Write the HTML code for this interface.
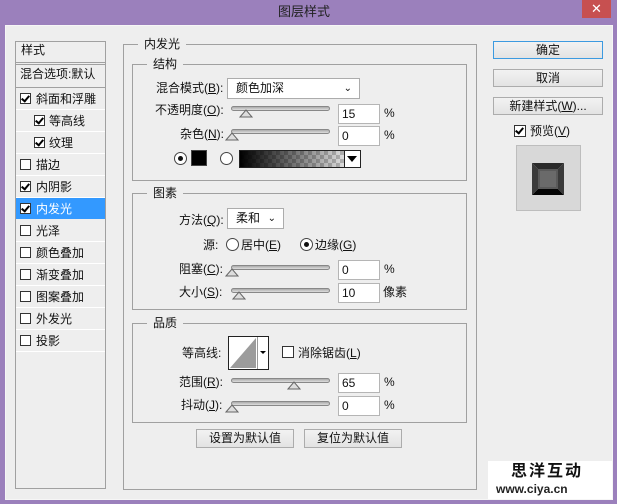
<!DOCTYPE html>
<html><head><meta charset="utf-8"><style>
*{margin:0;padding:0;box-sizing:border-box}
body{width:617px;height:504px;background:#9b80bc;font-family:"Liberation Sans","Noto Sans CJK SC",sans-serif;font-size:12px;color:#111;position:relative;overflow:hidden}
.a{position:absolute}
.t{position:absolute;white-space:nowrap;line-height:14px}
#content{left:5px;top:25px;width:608px;height:475px;background:#eeeeee;border:1px solid #f6f6f6}
.grp{position:absolute;border:1px solid #a0a0a0}
.leg{position:absolute;background:#eeeeee;padding:0 6px;line-height:14px;top:-8px;left:14px;font-size:12px}
.cb{position:absolute;width:11px;height:11px;border:1px solid #333;background:#fff}
.cb.on::after{content:"";position:absolute;left:2px;top:0px;width:3px;height:6px;border:solid #000;border-width:0 2px 2px 0;transform:rotate(40deg)}
.row{position:absolute;left:16px;width:89px;height:22px;border-bottom:1px solid #fff}
.inp{position:absolute;width:42px;height:20px;background:#fff;border:1px solid #b5b5b5;padding-left:3px;line-height:18px;font-size:12px}
.trk{position:absolute;height:5px;border:1px solid #888;border-radius:3px;background:linear-gradient(#aaa,#ddd);width:99px}
.th{position:absolute;width:0;height:0}
.btn{position:absolute;height:18px;border:1px solid #acacac;background:linear-gradient(#f2f2f2,#e3e3e3);text-align:center;line-height:16px;font-size:12px}
.rad{position:absolute;width:13px;height:13px;border-radius:50%;border:1px solid #444;background:#fff}
.rad.on::after{content:"";position:absolute;left:3px;top:3px;width:5px;height:5px;border-radius:50%;background:#111}
.sel{position:absolute;background:#fff;border:1px solid #acacac;height:21px;line-height:19px;padding-left:8px}
</style></head><body>
<div class="t" style="left:278px;top:5px;font-size:13px;color:#222">图层样式</div>
<div class="a" style="left:582px;top:0;width:29px;height:18px;background:#c75050;color:#fff;text-align:center;font-size:13px;line-height:17px">✕</div>
<div class="a" id="content"></div>

<!-- left panel -->
<div class="a" style="left:15px;top:41px;width:91px;height:448px;border:1px solid #a0a0a0;background:#eeeeee"></div>
<div class="t" style="left:21px;top:43px">样式</div>
<div class="a" style="left:16px;top:62px;width:89px;height:3px;border-top:1px solid #a0a0a0;border-bottom:1px solid #a0a0a0"></div>
<div class="t" style="left:20px;top:67px">混合选项:默认</div>
<div class="a" style="left:16px;top:87px;width:89px;height:1px;background:#a0a0a0"></div>
<div class="row" style="top:88px"></div><div class="cb on" style="left:20px;top:93px"></div><div class="t" style="left:36px;top:92px">斜面和浮雕</div>
<div class="row" style="top:110px"></div><div class="cb on" style="left:34px;top:115px"></div><div class="t" style="left:49px;top:114px">等高线</div>
<div class="row" style="top:132px"></div><div class="cb on" style="left:34px;top:137px"></div><div class="t" style="left:49px;top:136px">纹理</div>
<div class="row" style="top:154px"></div><div class="cb" style="left:20px;top:159px"></div><div class="t" style="left:36px;top:158px">描边</div>
<div class="row" style="top:176px"></div><div class="cb on" style="left:20px;top:181px"></div><div class="t" style="left:36px;top:180px">内阴影</div>
<div class="a" style="left:16px;top:198px;width:89px;height:21px;background:#3399ff"></div><div class="cb on" style="left:20px;top:203px"></div><div class="t" style="left:36px;top:202px;color:#fff">内发光</div>
<div class="row" style="top:220px"></div><div class="cb" style="left:20px;top:225px"></div><div class="t" style="left:36px;top:224px">光泽</div>
<div class="row" style="top:242px"></div><div class="cb" style="left:20px;top:247px"></div><div class="t" style="left:36px;top:246px">颜色叠加</div>
<div class="row" style="top:264px"></div><div class="cb" style="left:20px;top:269px"></div><div class="t" style="left:36px;top:268px">渐变叠加</div>
<div class="row" style="top:286px"></div><div class="cb" style="left:20px;top:291px"></div><div class="t" style="left:36px;top:290px">图案叠加</div>
<div class="row" style="top:308px"></div><div class="cb" style="left:20px;top:313px"></div><div class="t" style="left:36px;top:312px">外发光</div>
<div class="row" style="top:330px"></div><div class="cb" style="left:20px;top:335px"></div><div class="t" style="left:36px;top:334px">投影</div>

<!-- main group -->
<div class="grp" style="left:123px;top:44px;width:354px;height:446px"><div class="leg">内发光</div></div>
<div class="grp" style="left:132px;top:64px;width:335px;height:117px"><div class="leg">结构</div></div>
<div class="grp" style="left:132px;top:193px;width:335px;height:117px"><div class="leg">图素</div></div>
<div class="grp" style="left:132px;top:323px;width:335px;height:100px"><div class="leg">品质</div></div>

<!-- structure -->
<div class="t" style="left:156px;top:81px">混合模式(<u>B</u>):</div>
<div class="sel" style="left:227px;top:78px;width:133px">颜色加深<span style="position:absolute;right:7px;font-size:10px">⌄</span></div>
<div class="t" style="left:155px;top:103px">不透明度(<u>O</u>):</div>
<div class="trk" style="left:231px;top:106px"></div>
<svg class="a" style="left:239px;top:108px" width="14" height="10"><path d="M1 9 L7 2 L13 9 Z" fill="#ddd" stroke="#666"/></svg>
<div class="inp" style="left:338px;top:104px">15</div><div class="t" style="left:384px;top:106px">%</div>
<div class="t" style="left:180px;top:127px">杂色(<u>N</u>):</div>
<div class="trk" style="left:231px;top:129px"></div>
<svg class="a" style="left:225px;top:131px" width="14" height="10"><path d="M1 9 L7 2 L13 9 Z" fill="#ddd" stroke="#666"/></svg>
<div class="inp" style="left:338px;top:126px">0</div><div class="t" style="left:384px;top:128px">%</div>
<div class="rad on" style="left:174px;top:152px"></div>
<div class="a" style="left:191px;top:150px;width:16px;height:16px;background:#000;border:1px solid #444"></div>
<div class="rad" style="left:220px;top:152px"></div>
<div class="a" style="left:239px;top:150px;width:122px;height:18px;border:1px solid #222;background:linear-gradient(90deg,#000,rgba(0,0,0,0)) ,repeating-conic-gradient(#ccc 0 25%,#fff 0 50%) 0 0/8px 8px"></div>
<div class="a" style="left:344px;top:151px;width:16px;height:16px;background:#fff;border-left:1px solid #222"></div>
<svg class="a" style="left:346px;top:155px" width="12" height="8"><path d="M1 1 L11 1 L6 7 Z" fill="#000"/></svg>

<!-- elements -->
<div class="t" style="left:179px;top:213px">方法(<u>Q</u>):</div>
<div class="sel" style="left:227px;top:208px;width:57px">柔和<span style="position:absolute;right:7px;font-size:10px">⌄</span></div>
<div class="t" style="left:203px;top:238px">源:</div>
<div class="rad" style="left:226px;top:238px"></div><div class="t" style="left:241px;top:238px">居中(<u>E</u>)</div>
<div class="rad on" style="left:300px;top:238px"></div><div class="t" style="left:315px;top:238px">边缘(<u>G</u>)</div>
<div class="t" style="left:179px;top:262px">阻塞(<u>C</u>):</div>
<div class="trk" style="left:231px;top:265px"></div>
<svg class="a" style="left:225px;top:267px" width="14" height="10"><path d="M1 9 L7 2 L13 9 Z" fill="#ddd" stroke="#666"/></svg>
<div class="inp" style="left:338px;top:260px">0</div><div class="t" style="left:384px;top:262px">%</div>
<div class="t" style="left:179px;top:285px">大小(<u>S</u>):</div>
<div class="trk" style="left:231px;top:288px"></div>
<svg class="a" style="left:232px;top:290px" width="14" height="10"><path d="M1 9 L7 2 L13 9 Z" fill="#ddd" stroke="#666"/></svg>
<div class="inp" style="left:338px;top:283px">10</div><div class="t" style="left:383px;top:285px">像素</div>

<!-- quality -->
<div class="t" style="left:182px;top:346px">等高线:</div>
<div class="a" style="left:228px;top:336px;width:41px;height:34px;background:#fff;border:1px solid #222"></div>
<svg class="a" style="left:229px;top:337px" width="28" height="32"><path d="M1 31 L27 1 L27 31 Z" fill="#9c9c9c"/></svg>
<div class="a" style="left:257px;top:337px;width:1px;height:32px;background:#999"></div>
<svg class="a" style="left:259px;top:350px" width="8" height="5"><path d="M1 1 L7 1 L4 4 Z" fill="#000"/></svg>
<div class="a" style="left:282px;top:346px;width:12px;height:12px;border:1px solid #333;background:#fff"></div>
<div class="t" style="left:298px;top:346px">消除锯齿(<u>L</u>)</div>
<div class="t" style="left:179px;top:375px">范围(<u>R</u>):</div>
<div class="trk" style="left:231px;top:378px"></div>
<svg class="a" style="left:287px;top:380px" width="14" height="10"><path d="M1 9 L7 2 L13 9 Z" fill="#ddd" stroke="#666"/></svg>
<div class="inp" style="left:338px;top:373px">65</div><div class="t" style="left:384px;top:375px">%</div>
<div class="t" style="left:181px;top:398px">抖动(<u>J</u>):</div>
<div class="trk" style="left:231px;top:401px"></div>
<svg class="a" style="left:225px;top:403px" width="14" height="10"><path d="M1 9 L7 2 L13 9 Z" fill="#ddd" stroke="#666"/></svg>
<div class="inp" style="left:338px;top:396px">0</div><div class="t" style="left:384px;top:398px">%</div>
<div class="btn" style="left:196px;top:429px;width:98px;height:19px">设置为默认值</div>
<div class="btn" style="left:304px;top:429px;width:98px;height:19px">复位为默认值</div>

<!-- right -->
<div class="btn" style="left:493px;top:41px;width:110px;border-color:#3c9ae0">确定</div>
<div class="btn" style="left:493px;top:69px;width:110px">取消</div>
<div class="btn" style="left:493px;top:97px;width:110px">新建样式(<u>W</u>)...</div>
<div class="cb on" style="left:514px;top:125px;width:12px;height:12px"></div>
<div class="t" style="left:530px;top:124px">预览(<u>V</u>)</div>
<div class="a" style="left:516px;top:145px;width:65px;height:66px;background:#d8d8d8;border:1px solid #bdbdbd"></div>
<svg class="a" style="left:532px;top:163px" width="32" height="32">
<path d="M0 0 H32 L26 6 H6 Z" fill="#2a2a2a"/><path d="M0 32 H32 L26 26 H6 Z" fill="#050505"/>
<path d="M0 0 L6 6 V26 L0 32 Z" fill="#3a3a3a"/><path d="M32 0 L26 6 V26 L32 32 Z" fill="#3a3a3a"/>
<rect x="6" y="6" width="20" height="20" fill="#5a5a5a"/><rect x="8" y="8" width="16" height="16" fill="#6a6a6a"/></svg>

<div class="a" style="left:488px;top:461px;width:124px;height:38px;background:#fff"></div>
<div class="t" style="left:511px;top:465px;font-size:16px;font-weight:bold;letter-spacing:2px;color:#111">思洋互动</div>
<div class="t" style="left:496px;top:482px;font-size:12px;font-weight:bold;color:#222">www.ciya.cn</div>
</body></html>
